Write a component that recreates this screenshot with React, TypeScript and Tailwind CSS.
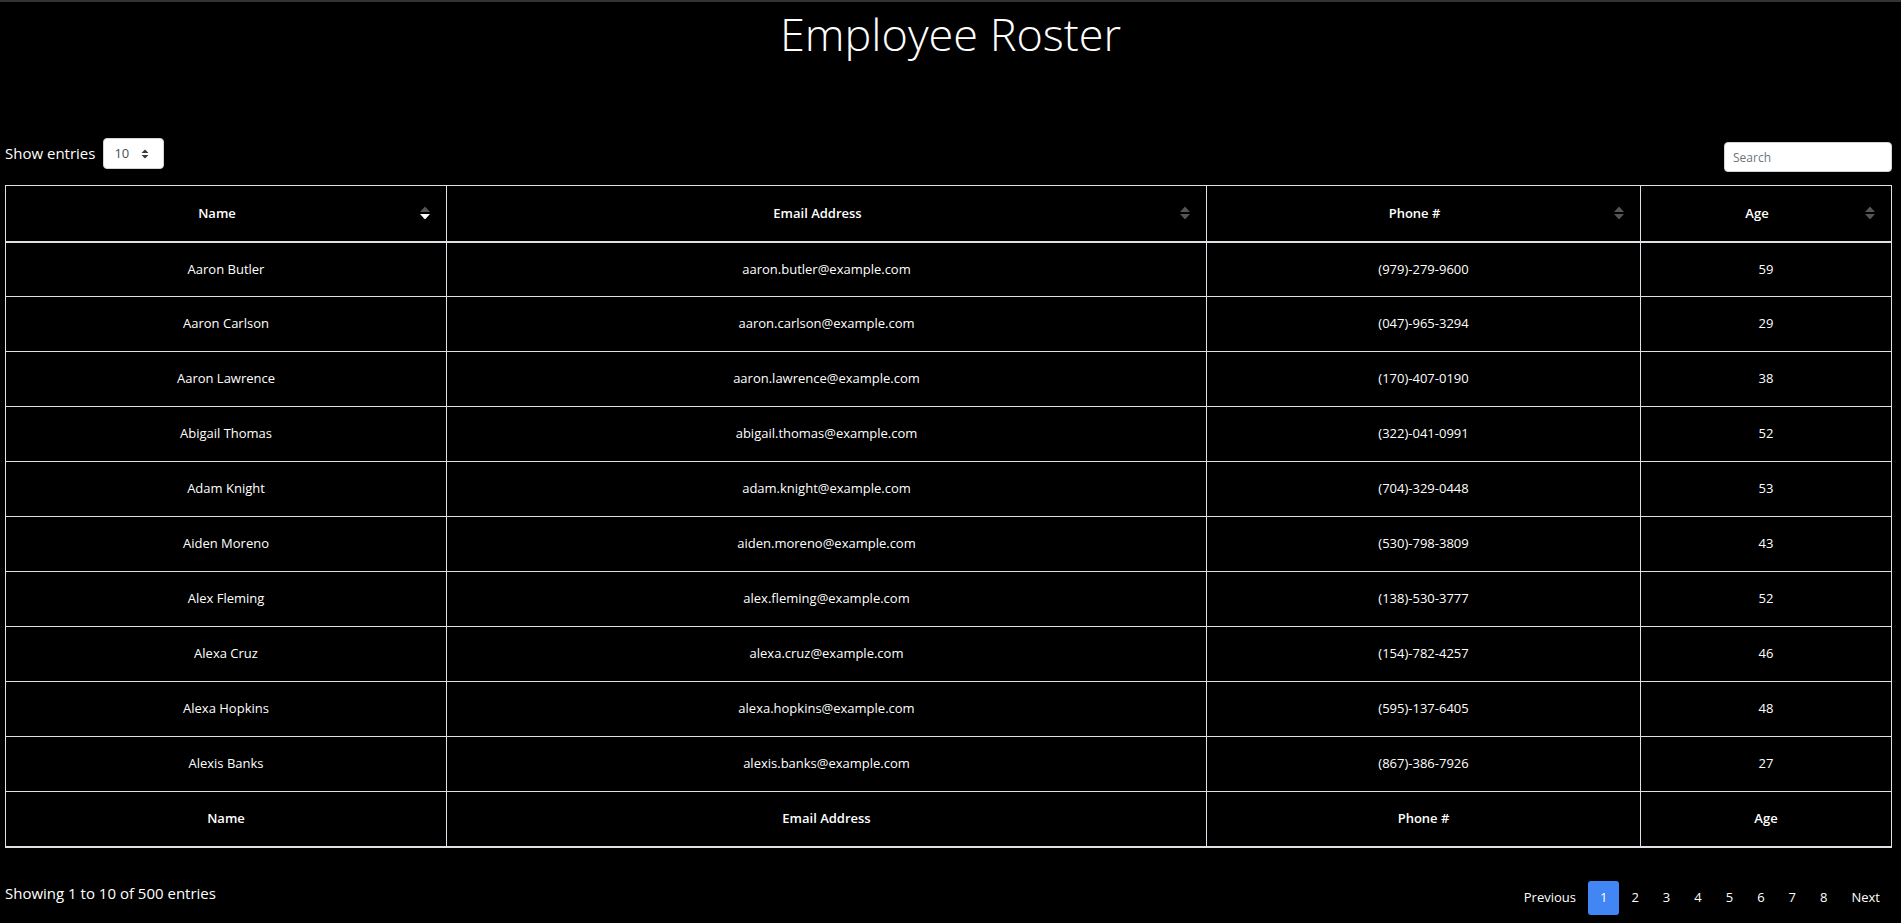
import type { ReactNode } from 'react'

const font = { fontFamily: '"Open Sans", "Noto Sans", Arial, sans-serif' }

type Employee = { name: string; email: string; phone: string; age: number }

const rows: Employee[] = [
  { name: 'Aaron Butler', email: 'aaron.butler@example.com', phone: '(979)-279-9600', age: 59 },
  { name: 'Aaron Carlson', email: 'aaron.carlson@example.com', phone: '(047)-965-3294', age: 29 },
  { name: 'Aaron Lawrence', email: 'aaron.lawrence@example.com', phone: '(170)-407-0190', age: 38 },
  { name: 'Abigail Thomas', email: 'abigail.thomas@example.com', phone: '(322)-041-0991', age: 52 },
  { name: 'Adam Knight', email: 'adam.knight@example.com', phone: '(704)-329-0448', age: 53 },
  { name: 'Aiden Moreno', email: 'aiden.moreno@example.com', phone: '(530)-798-3809', age: 43 },
  { name: 'Alex Fleming', email: 'alex.fleming@example.com', phone: '(138)-530-3777', age: 52 },
  { name: 'Alexa Cruz', email: 'alexa.cruz@example.com', phone: '(154)-782-4257', age: 46 },
  { name: 'Alexa Hopkins', email: 'alexa.hopkins@example.com', phone: '(595)-137-6405', age: 48 },
  { name: 'Alexis Banks', email: 'alexis.banks@example.com', phone: '(867)-386-7926', age: 27 },
]

const columns = ['Name', 'Email Address', 'Phone #', 'Age']

/** Stacked up/down triangles; `active` lights the down one. */
function SortIcon({ active }: { active?: boolean }) {
  return (
    <svg width="10" height="13" viewBox="0 0 10 13" className="absolute right-[16px] top-1/2 -translate-y-1/2">
      <path d="M0 5.5 L5 0 L10 5.5 Z" fill="#555" />
      <path d="M0 7.5 L10 7.5 L5 13 Z" fill={active ? '#fff' : '#555'} />
    </svg>
  )
}

function HeadCell({ children, active }: { children: ReactNode; active?: boolean }) {
  return (
    <th className="relative h-[56px] border border-[#dee2e6] border-b-2 pl-3 pr-[30px] text-center align-middle text-[13px] font-semibold text-white">
      {children}
      <SortIcon active={active} />
    </th>
  )
}

export default function App() {
  return (
    <div className="min-h-screen bg-black text-white" style={font}>
      <div className="h-[2px] bg-[#333]" />
      <h1 className="h-[67px] pt-[1px] text-center text-[45px] font-light leading-[61px] text-white">Employee Roster</h1>

      <div className="pl-[5px] pr-[9px]">
        <div className="mt-[69px] flex items-start justify-between">
          <label className="flex items-center gap-[8px] text-[15px]">
            Show entries
            <div className="flex h-[31px] w-[61px] items-center justify-between rounded-[4px] border border-[#ced4da] bg-white pl-[10px] pr-[14px] text-[13px] text-[#495057]">
              <span>10</span>
              <svg width="8" height="10" viewBox="0 0 8 10">
                <path d="M0.5 4 L4 0.5 L7.5 4 Z" fill="#343a40" />
                <path d="M0.5 6 L7.5 6 L4 9.5 Z" fill="#343a40" />
              </svg>
            </div>
          </label>
          <input
            type="search"
            placeholder="Search"
            className="mt-[4px] h-[30px] w-[168px] rounded-[4px] border border-[#ced4da] bg-white px-[8px] text-[12px] text-[#495057] outline-none placeholder:text-[#6c757d]"
          />
        </div>

        <table className="mt-[13px] w-full table-fixed border-collapse border border-[#dee2e6]">
          <colgroup>
            <col className="w-[441px]" />
            <col className="w-[760px]" />
            <col className="w-[434px]" />
            <col />
          </colgroup>
          <thead>
            <tr>
              {columns.map((c, i) => (
                <HeadCell key={c} active={i === 0}>
                  {c}
                </HeadCell>
              ))}
            </tr>
          </thead>
          <tbody>
            {rows.map((r) => (
              <tr key={r.email} className="h-[55px]">
                {[r.name, r.email, r.phone, r.age].map((v, i) => (
                  <td key={i} className="border border-[#dee2e6] px-3 text-center align-middle text-[13px] text-white">
                    {v}
                  </td>
                ))}
              </tr>
            ))}
          </tbody>
          <tfoot>
            <tr className="h-[55px]">
              {columns.map((c) => (
                <th key={c} className="border border-[#dee2e6] border-b-2 px-3 text-center align-middle text-[13px] font-semibold text-white">
                  {c}
                </th>
              ))}
            </tr>
          </tfoot>
        </table>

        <div className="mt-[33px] flex items-start justify-between">
          <div className="text-[15px] leading-[24px]">Showing 1 to 10 of 500 entries</div>
          <nav className="flex h-[34px] items-center text-[13px]">
            <span className="px-3">Previous</span>
            {[1, 2, 3, 4, 5, 6, 7, 8].map((n) => (
              <span
                key={n}
                className={
                  n === 1
                    ? 'flex h-[34px] items-center rounded-[3px] bg-[#4285f4] px-3 text-white'
                    : 'flex h-[34px] items-center px-3 text-white'
                }
              >
                {n}
              </span>
            ))}
            <span className="px-3">Next</span>
          </nav>
        </div>
      </div>
    </div>
  )
}
